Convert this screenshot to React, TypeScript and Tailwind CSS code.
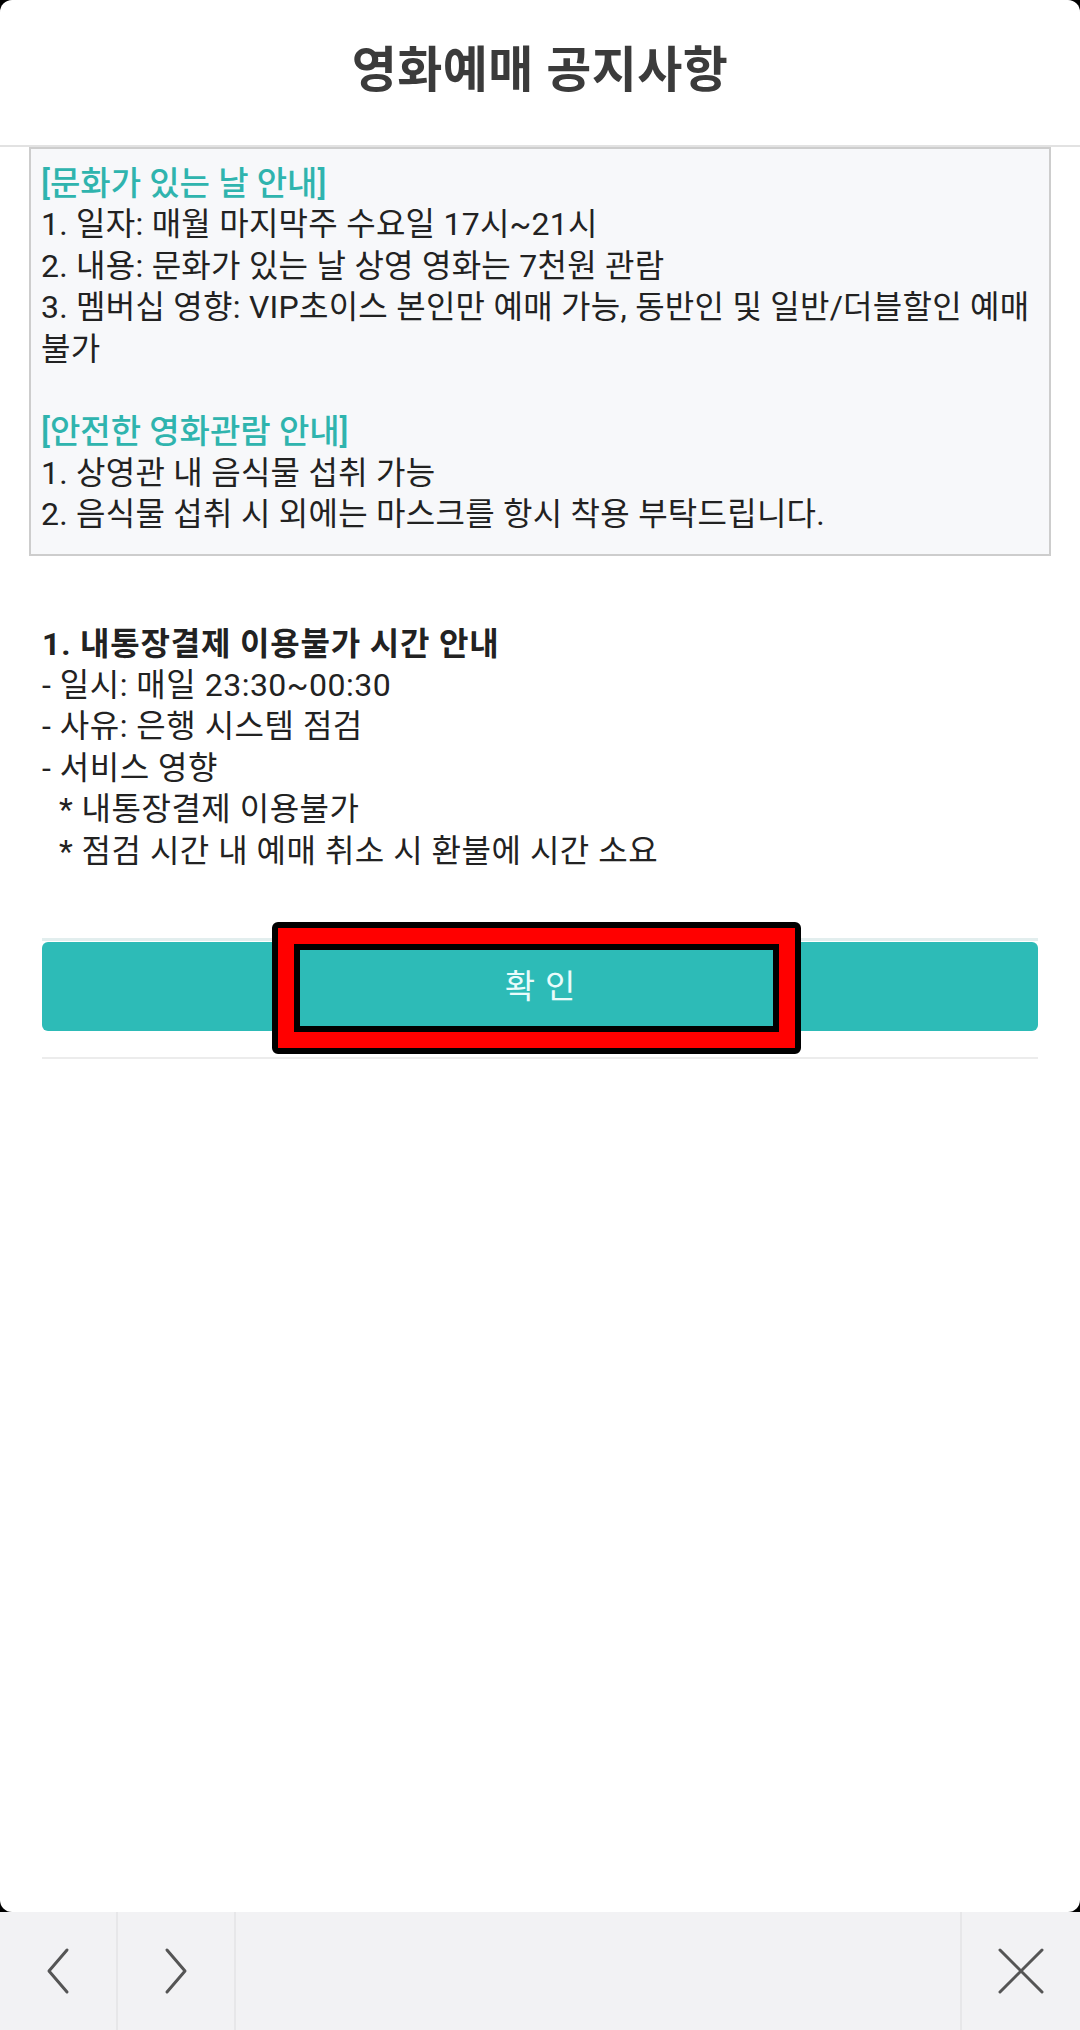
import React from 'react';

const FONT = '"Roboto", "Noto Sans CJK KR", "Noto Sans", sans-serif';

const notices = [
  { head: true, text: '[문화가 있는 날 안내]' },
  { text: '1. 일자: 매월 마지막주 수요일 17시~21시' },
  { text: '2. 내용: 문화가 있는 날 상영 영화는 7천원 관람' },
  { text: '3. 멤버십 영향: VIP초이스 본인만 예매 가능, 동반인 및 일반/더블할인 예매' },
  { text: '불가' },
  { text: '\u00a0' },
  { head: true, text: '[안전한 영화관람 안내]' },
  { text: '1. 상영관 내 음식물 섭취 가능' },
  { text: '2. 음식물 섭취 시 외에는 마스크를 항시 착용 부탁드립니다.' },
];

const bankLines = [
  '- 일시: 매일 23:30~00:30',
  '- 사유: 은행 시스템 점검',
  '- 서비스 영향',
  '\u00a0\u00a0* 내통장결제 이용불가',
  '\u00a0\u00a0* 점검 시간 내 예매 취소 시 환불에 시간 소요',
];

const NavButton = ({ children, wide }: { children?: React.ReactNode; wide?: boolean }) => (
  <div
    className={
      wide
        ? 'flex-1 h-full border-r-2 border-[#e7e7e9]'
        : 'w-[118px] h-full flex items-center justify-center border-r-2 border-[#e7e7e9]'
    }
  >
    {children}
  </div>
);

export default function App() {
  return (
    <div className="w-[1080px] h-[2030px] bg-black flex flex-col overflow-hidden" style={{ fontFamily: FONT }}>
      <div className="h-[1912px] bg-white rounded-[12px] flex flex-col">
        {/* header */}
        <div className="h-[147px] flex items-center justify-center border-b-2 border-[#e2e2e2] pb-[4px]">
          <h1 className="text-[49px] font-bold text-[#3b3b3b] tracking-[0.4px]">영화예매 공지사항</h1>
        </div>

        {/* notice box */}
        <div className="mx-[29px] border-2 border-[#cdcdcd] bg-[#f7f8fa] pl-[10px] pt-[14px] pb-[18px] text-[32px] leading-[41.4px] text-[#222222]">
          {notices.map((n, i) => (
            <p
              key={i}
              className={
                n.head
                  ? 'text-[#2fb4ae] text-[33px] font-medium whitespace-nowrap'
                  : 'whitespace-nowrap tracking-[0.25px]'
              }
            >
              {n.text}
            </p>
          ))}
        </div>

        {/* bank transfer notice */}
        <div className="px-[42px] pt-[68px] text-[32px] leading-[41.4px] text-[#222222]">
          <p className="font-bold tracking-[0.8px]">1. 내통장결제 이용불가 시간 안내</p>
          {bankLines.map((l, i) => (
            <p key={i} className="whitespace-pre tracking-[0.5px]">
              {l}
            </p>
          ))}
        </div>

        {/* confirm button */}
        <div className="mx-[42px] mt-[66px] border-t-[3px] border-[#e2eeee] pt-[1px]">
          <div className="relative">
            <button className="w-full h-[89px] rounded-[6px] bg-[#2dbbb7] text-[#eafbfb] text-[33px] tracking-[10px] pl-[10px]">
              확인
            </button>
            {/* red annotation frame */}
            <div className="absolute left-[230px] top-[-20px] w-[529px] h-[132px] border-[6px] border-black rounded-[6px] pointer-events-none">
              <div className="w-full h-full border-[16px] border-[#ff0000]">
                <div className="w-full h-full border-[6px] border-black" />
              </div>
            </div>
          </div>
          <div className="mt-[26px] h-[2px] bg-[#ececec]" />
        </div>
      </div>

      {/* bottom toolbar */}
      <div className="h-[118px] bg-[#f2f2f4] flex">
        <NavButton>
          <svg width="26" height="48" viewBox="0 0 26 48" fill="none">
            <path d="M22 3 L4 24 L22 45" stroke="#555" strokeWidth="3" strokeLinecap="round" strokeLinejoin="round" />
          </svg>
        </NavButton>
        <NavButton>
          <svg width="26" height="48" viewBox="0 0 26 48" fill="none">
            <path d="M4 3 L22 24 L4 45" stroke="#555" strokeWidth="3" strokeLinecap="round" strokeLinejoin="round" />
          </svg>
        </NavButton>
        <NavButton wide />
        <div className="w-[118px] h-full flex items-center justify-center">
          <svg width="48" height="48" viewBox="0 0 48 48" fill="none">
            <path d="M3 3 L45 45 M45 3 L3 45" stroke="#555" strokeWidth="3" strokeLinecap="round" />
          </svg>
        </div>
      </div>
    </div>
  );
}
